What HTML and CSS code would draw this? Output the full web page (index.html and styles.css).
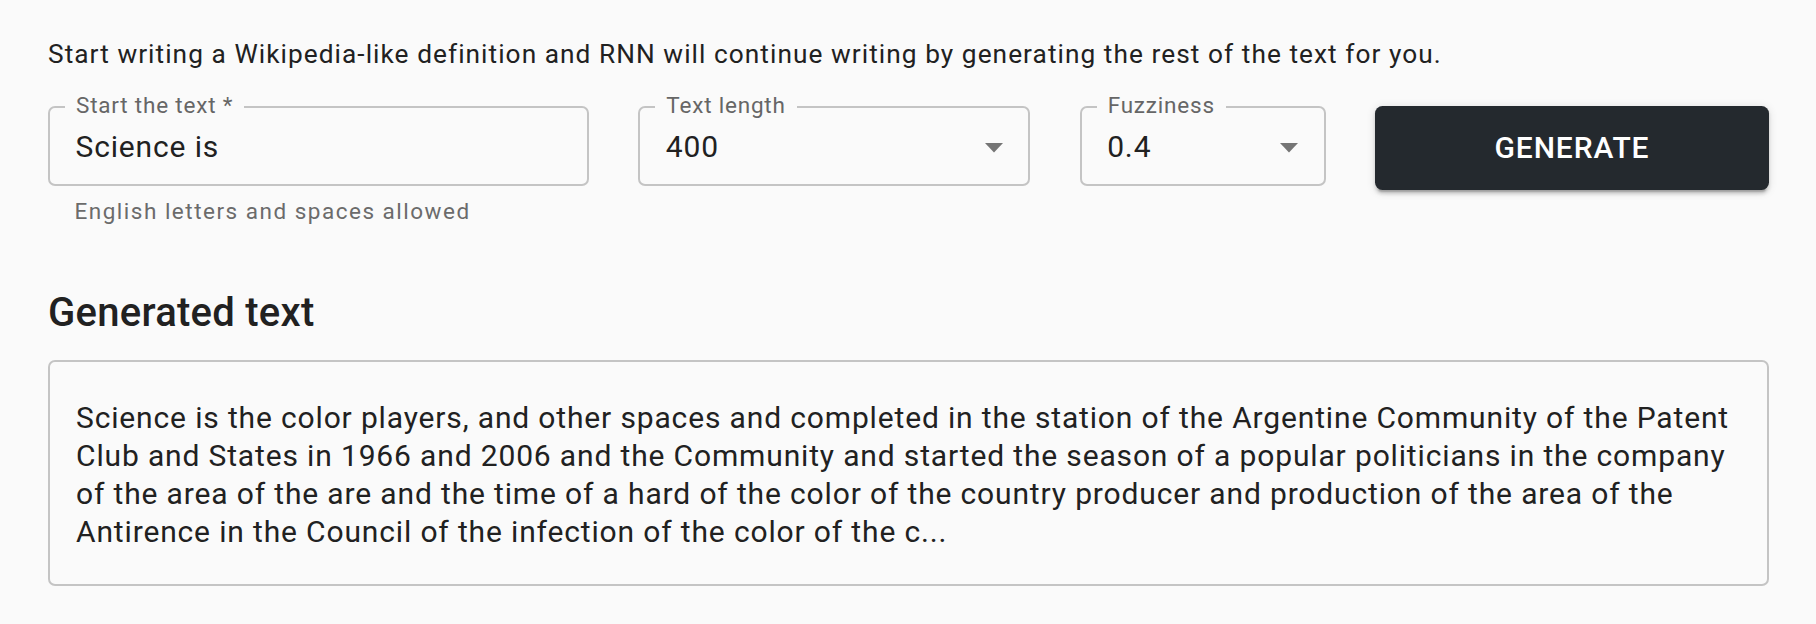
FILE: index.html
```html
<!DOCTYPE html>
<html lang="en">
<head>
<meta charset="utf-8">
<title>RNN text generator</title>
<link rel="stylesheet" href="styles.css">
</head>
<body>
<main class="page">
  <p class="intro">Start writing a Wikipedia-like definition and RNN will continue writing by generating the rest of the text for you.</p>
  <form class="controls">
    <div class="field">
      <fieldset class="outlined">
        <legend>Start the text *</legend>
        <div class="value">Science is</div>
      </fieldset>
      <p class="helper">English letters and spaces allowed</p>
    </div>
    <fieldset class="outlined">
      <legend>Text length</legend>
      <div class="value select">
        <span>400</span>
        <svg class="arrow" width="18" height="10" viewBox="0 0 18 10"><polygon points="0,0 18,0 9,9.5" fill="#757575"/></svg>
      </div>
    </fieldset>
    <fieldset class="outlined">
      <legend>Fuzziness</legend>
      <div class="value select">
        <span>0.4</span>
        <svg class="arrow" width="18" height="10" viewBox="0 0 18 10"><polygon points="0,0 18,0 9,9.5" fill="#757575"/></svg>
      </div>
    </fieldset>
    <button type="button" class="generate">GENERATE</button>
  </form>
  <h2 class="heading">Generated text</h2>
  <div class="output">Science is the color players, and other spaces and completed in the station of the Argentine Community of the Patent Club and States in 1966 and 2006 and the Community and started the season of a popular politicians in the company of the area of the are and the time of a hard of the color of the country producer and production of the area of the Antirence in the Council of the infection of the color of the c...</div>
</main>
</body>
</html>
```

FILE: styles.css
```css
html, body {
  margin: 0;
  padding: 0;
  background: #fafafa;
}

body {
  font-family: Roboto, "Liberation Sans", Arial, sans-serif;
  color: #212121;
}

.page {
  padding: 35.6px 47px 0 48px;
}

.intro {
  margin: 0;
  font-size: 26.25px;
  line-height: 37.5px;
  letter-spacing: 1.05px;
}

.controls {
  margin-top: 23.4px;
  display: grid;
  grid-template-columns: 541fr 392fr 246fr 394fr;
  column-gap: 49.33px;
  align-items: start;
}

.field {
  min-width: 0;
}

.outlined {
  margin: 0;
  padding: 0;
  min-width: 0;
  border: 2px solid #c4c4c4;
  border-radius: 7px;
}

.outlined legend {
  margin-left: 15px;
  padding: 0 11px 3px;
  font-size: 22.5px;
  line-height: 18px;
  color: #666666;
  letter-spacing: 0.8px;
}

.value {
  padding: 15px 0 21.5px 25.5px;
  font-size: 30px;
  line-height: 30px;
  letter-spacing: 0.85px;
  color: #212121;
}

.select {
  display: flex;
  align-items: center;
  justify-content: space-between;
  padding-right: 25.5px;
}

.arrow {
  display: block;
  margin-top: 1px;
}

.helper {
  margin: 7px 0 0;
  padding-left: 26.5px;
  font-size: 22.5px;
  line-height: 37.35px;
  letter-spacing: 1.5px;
  color: #6b6b6b;
}

.generate {
  margin-top: 9.5px;
  height: 84px;
  border: 0;
  border-radius: 7.5px;
  background: #24292e;
  color: #ffffff;
  font-family: Roboto, "Liberation Sans", Arial, sans-serif;
  font-weight: 500;
  font-size: 30px;
  letter-spacing: 0.9px;
  box-shadow: 0 5.6px 1.9px -3.75px rgba(0, 0, 0, 0.2),
              0 3.75px 3.75px 0 rgba(0, 0, 0, 0.14),
              0 1.9px 9.4px 0 rgba(0, 0, 0, 0.12);
  cursor: pointer;
}

.heading {
  margin: 58.6px 0 22.7px;
  font-size: 40px;
  line-height: 48px;
  font-weight: 500;
  letter-spacing: 0.27px;
  color: #212121;
}

.output {
  border: 2px solid #c4c4c4;
  border-radius: 7px;
  padding: 37px 26px 33.3px 26px;
  font-size: 30px;
  line-height: 38px;
  letter-spacing: 0.85px;
  color: #212121;
}
```
